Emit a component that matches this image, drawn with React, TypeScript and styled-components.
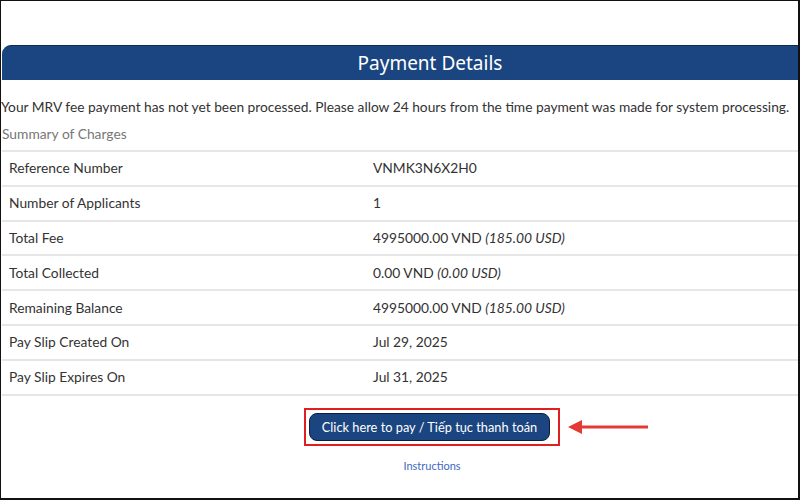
import React from "react";
import styled, { createGlobalStyle } from "styled-components";

const GlobalStyle = createGlobalStyle`
  html, body {
    margin: 0;
    padding: 0;
    background: #ffffff;
  }
  * {
    box-sizing: border-box;
  }
`;

const Frame = styled.div`
  width: 800px;
  height: 500px;
  border-style: solid;
  border-color: #111;
  border-width: 1px 2px 2px 1px;
  padding: 44px 0 0 1px;
  font-family: Lato, "Noto Sans", sans-serif;
  color: #333;
  overflow: hidden;
`;

const Header = styled.div`
  height: 35px;
  background: #1b4580;
  border-top: 1px solid #0e2a55;
  border-radius: 9px 0 0 0;
  display: flex;
  align-items: center;
  justify-content: center;
  padding-left: 60px;
  color: #fff;
  font-family: "Noto Sans", "Open Sans", sans-serif;
  font-size: 19px;
`;

const Notice = styled.p`
  margin: 17px 0 0 -1px;
  font-size: 13.78px;
  white-space: nowrap;
  line-height: 20px;
`;

const Summary = styled.p`
  margin: 7px 0 0 0;
  font-size: 13.8px;
  color: #777;
  line-height: 20px;
`;

const Table = styled.div`
  margin-top: 6px;
  border-top: 2px solid #e6e6e6;
`;

const Row = styled.div`
  display: grid;
  grid-template-columns: 371px 1fr;
  height: 34.8px;
  padding-bottom: 1px;
  align-items: center;
  border-bottom: 2px solid #e6e6e6;
  font-size: 13.8px;
`;

const Label = styled.span`
  padding-left: 7px;
`;

const Value = styled.span``;

const Usd = styled.em`
  font-style: italic;
`;

const Actions = styled.div`
  display: flex;
  flex-direction: column;
  align-items: center;
  padding-top: 12px;
  padding-left: 64px;
`;

const ButtonWrap = styled.div`
  position: relative;
`;

const Highlight = styled.div`
  border: 2px solid #e02020;
  padding: 3px 8px 3px 3px;
`;

const PayButton = styled.button`
  display: block;
  height: 28px;
  padding: 0 12px;
  background: #1b4580;
  border: 1.5px solid #0d1f3a;
  border-radius: 8px;
  color: #fff;
  font-family: Lato, "Noto Sans", sans-serif;
  font-size: 12.8px;
  cursor: pointer;
`;

const Pointer = styled.svg`
  position: absolute;
  left: 264px;
  top: 10px;
`;

const Instructions = styled.a`
  margin-top: 13px;
  font-size: 11px;
  color: #3d68c0;
  text-decoration: none;
`;

const rows: { label: string; value: string; usd?: string }[] = [
  { label: "Reference Number", value: "VNMK3N6X2H0" },
  { label: "Number of Applicants", value: "1" },
  { label: "Total Fee", value: "4995000.00 VND", usd: "(185.00 USD)" },
  { label: "Total Collected", value: "0.00 VND", usd: "(0.00 USD)" },
  { label: "Remaining Balance", value: "4995000.00 VND", usd: "(185.00 USD)" },
  { label: "Pay Slip Created On", value: "Jul 29, 2025" },
  { label: "Pay Slip Expires On", value: "Jul 31, 2025" },
];

const App = () => {
  return (
    <>
      <GlobalStyle />
      <Frame>
        <Header>Payment Details</Header>
        <Notice>
          Your MRV fee payment has not yet been processed. Please allow 24 hours
          from the time payment was made for system processing.
        </Notice>
        <Summary>Summary of Charges</Summary>
        <Table>
          {rows.map((r) => (
            <Row key={r.label}>
              <Label>{r.label}</Label>
              <Value>
                {r.value} {r.usd && <Usd>{r.usd}</Usd>}
              </Value>
            </Row>
          ))}
        </Table>
        <Actions>
          <ButtonWrap>
            <Highlight>
              <PayButton>Click here to pay / Tiếp tục thanh toán</PayButton>
            </Highlight>
            <Pointer width="82" height="18" viewBox="0 0 82 18">
              <polygon points="0,9 14,2 14,16" fill="#e53935" />
              <line x1="12" y1="9" x2="80" y2="9" stroke="#e53935" strokeWidth="3" />
            </Pointer>
          </ButtonWrap>
          <Instructions href="#">Instructions</Instructions>
        </Actions>
      </Frame>
    </>
  );
};

export default App;
